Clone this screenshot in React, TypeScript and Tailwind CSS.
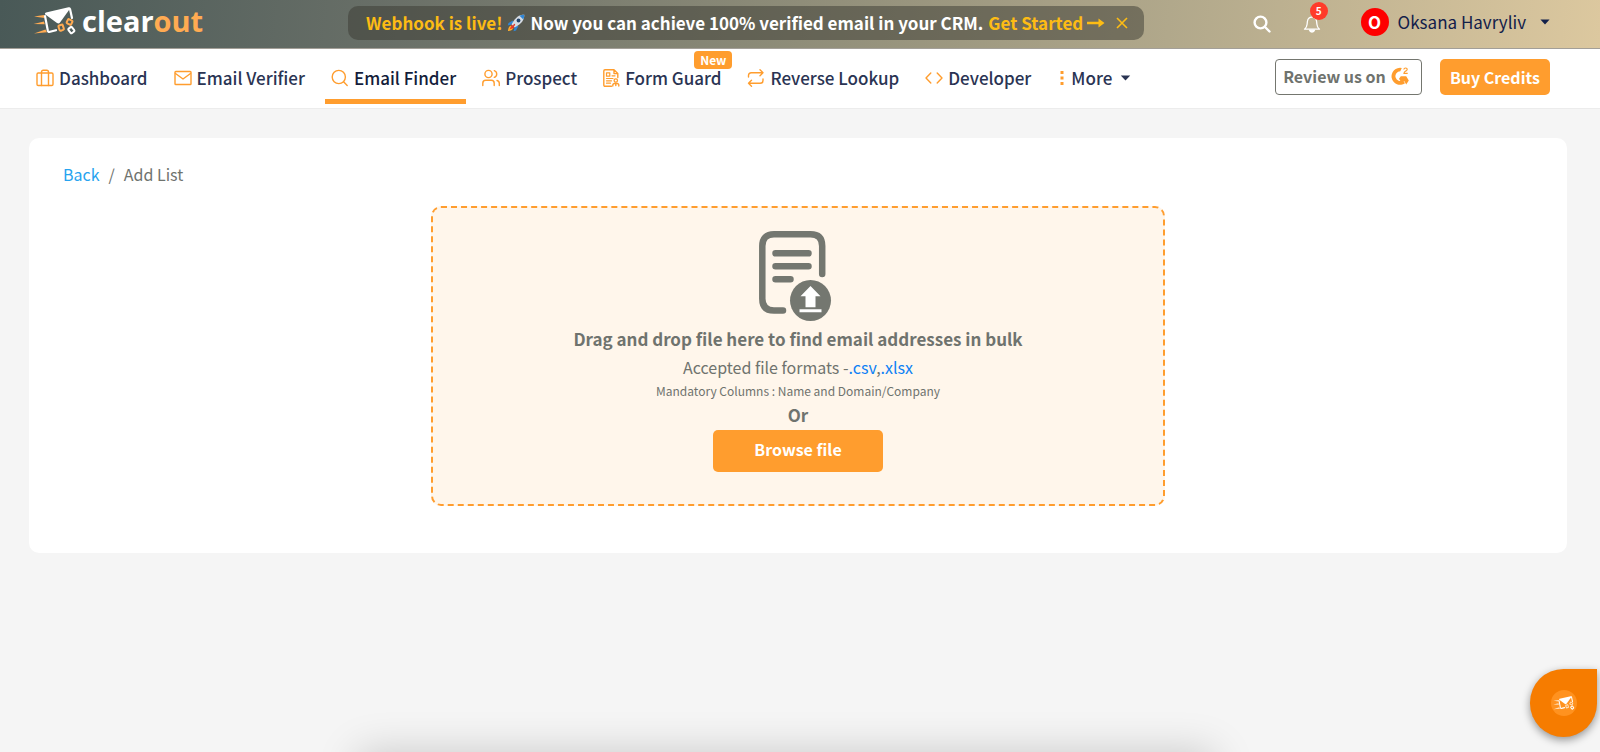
import React from "react";

function LogoMark({ className, accent = "#ffab52" }: { className: string; accent?: string }) {
  return (
    <svg className={className} viewBox="0 0 44 28" fill="none" aria-hidden="true">
      <path d="M1 9.500 11 8l.5 3zM.5 17l10.500-2.500.8 2.800zM1 26.500 12.500 22.500l1.500 2.800z" fill={accent} />
      <path d="m12 9 2.800 14.500q.4 1.800 2.200 1.300l6-1.600" stroke="#fff" strokeWidth="2.200" strokeLinecap="round" />
      <path d="m37 2 2 9" stroke="#fff" strokeWidth="2.200" strokeLinecap="round" />
      <path d="M12 7.200Q11.700 6 13 5.600L35.500.3q1.800-.4 2 .8L27 15.500q-1.200 1.500-3 .5z" fill="#fff" />
      <g strokeWidth="2">
        <rect x="26" y="18" width="4.500" height="5.500" rx="1" transform="rotate(-18 28 21)" stroke={accent} />
        <rect x="34" y="12.500" width="5" height="4.500" rx="1" transform="rotate(28 36 15)" stroke={accent} />
        <rect x="36" y="20.500" width="4.500" height="5.500" rx="1" transform="rotate(-38 38 23)" stroke="#fff" />
      </g>
    </svg>
  );
}

function Rocket() {
  return (
    <svg className="h-[18px] w-[18px]" viewBox="0 0 18 18" aria-hidden="true">
      <path d="M6 6.500 1.500 9l-.8 2.500L6 10zM11.500 12 9 16.500l-2.500.8L8 12z" fill="#2f86d6" />
      <path d="M4 11.500c-2 .8-2.800 3-3 5.500 2.500-.2 4.700-1 5.500-3z" fill="#ffb02e" />
      <path d="M4.500 12.500c-1 .6-1.600 1.600-1.900 2.900 1.300-.3 2.300-.9 2.900-1.900z" fill="#f8451f" />
      <path d="M17.300.7C12.500.6 8.500 2.800 4.500 10.500l3 3C15.200 9.500 17.400 5.500 17.300.7z" fill="#d5dbe3" />
      <path d="M17.300.7c-1.700 0-3.300.3-4.800 1l3.800 3.800c.7-1.500 1-3.100 1-4.800z" fill="#2f86d6" />
      <path d="m4.500 10.500 3 3-1.700.6-1.900-1.900z" fill="#e0392b" />
      <circle cx="11.500" cy="6.500" r="1.900" fill="#26486e" />
      <path d="m7.500 10.500-2.500 3.500" stroke="#e0392b" strokeWidth="1.300" strokeLinecap="round" />
    </svg>
  );
}

function Icon({ children, width = 18 }: { children: React.ReactNode; width?: number }) {
  return (
    <svg width={width} height="18" viewBox={`0 0 ${width} 18`} fill="none" stroke="#ff9d2e" strokeWidth="1.400" strokeLinecap="round" strokeLinejoin="round" aria-hidden="true" className="shrink-0">
      {children}
    </svg>
  );
}

function Caret({ className }: { className: string }) {
  return (
    <svg className={className} viewBox="0 0 12 7" fill="currentColor" aria-hidden="true">
      <path d="M.5.5h11L6 6.500z" />
    </svg>
  );
}

const items = [
  {
    label: "Dashboard",
    icon: (
      <Icon>
        <rect x="1" y="4" width="16" height="12.500" rx="1.200" />
        <path d="M5.500 16.500V3q0-1.800 1.800-1.800h3.400q1.800 0 1.800 1.800v13.500" />
      </Icon>
    ),
  },
  {
    label: "Email Verifier",
    icon: (
      <Icon>
        <rect x="1" y="2.500" width="16" height="13" rx=".8" />
        <path d="m1.500 4.500 7.500 5.500 7.500-5.500" />
      </Icon>
    ),
  },
  {
    label: "Email Finder",
    active: true,
    icon: (
      <Icon>
        <circle cx="7.800" cy="8" r="6.600" />
        <path d="m12.800 13 3.400 3.400" />
      </Icon>
    ),
  },
  {
    label: "Prospect",
    icon: (
      <Icon>
        <circle cx="6.500" cy="5" r="3.600" />
        <path d="M.8 16.500v-2.300q0-2.900 2.900-2.900h5.600q2.900 0 2.900 2.900v2.300M12.300 1.600a3.600 3.600 0 0 1 0 6.800M15 11.500q2.300.5 2.300 2.900v2.100" />
      </Icon>
    ),
  },
  {
    label: "Form Guard",
    isNew: true,
    icon: (
      <Icon width={17}>
        <path d="M8.500 17.200H2q-1.200 0-1.200-1.200V2Q.8.800 2 .8h9L14.800 4.600V8.500M11 .8v3.800h3.800" />
        <path d="M3.500 3.800h3.300v3.400H3.500zM9 6.800h3M3.500 9.500H10M3.500 11.800h5M3.500 14.200h4" strokeWidth="1.200" />
        <circle cx="12.800" cy="11.500" r="1.700" strokeWidth="1.300" />
        <path d="M9.800 17v-1q0-1.800 3-1.800t3 1.800v1M12.800 14.500v2" strokeWidth="1.400" />
      </Icon>
    ),
  },
  {
    label: "Reverse Lookup",
    icon: (
      <Icon>
        <path d="m13 .8 3 3-3 3M1.500 8V6.600q0-2.800 2.800-2.800H16M4.500 17.200l-3-3 3-3M16 10v1.400q0 2.800-2.800 2.800H1.500" />
      </Icon>
    ),
  },
  {
    label: "Developer",
    icon: (
      <Icon>
        <path d="M5.800 4 1 9l4.800 5M12.200 4 17 9l-4.800 5" />
      </Icon>
    ),
  },
];

export default function App() {
  return (
    <div className="relative min-h-screen overflow-hidden bg-[#f5f5f5] font-['Source_Sans_Pro','Noto_Sans_CJK_SC',sans-serif] text-[16px] text-[#6f736e]">
      <header className="flex h-[49px] items-center border-b border-[#a39f98] bg-[linear-gradient(95deg,#495957_0%,#6a7068_25%,#8f8d79_50%,#b1a88b_73%,#dcc89f_100%)] pr-[50px] pb-px pl-[33px] text-[17px]">
        <a href="#home" className="flex w-[315px] shrink-0 items-center gap-[5px] pb-[5px]">
          <LogoMark className="h-7 w-11" />
          <span className="font-['Open_Sans',sans-serif] text-[29px] leading-7 font-bold text-white">
            clear<span className="text-[#ffab52]">out</span>
          </span>
        </a>
        <div className="mb-px flex h-[34px] items-center gap-[5px] rounded-[10px] bg-[#3a3a32]/50 pr-4 pl-[18px] leading-6 font-bold whitespace-nowrap text-white">
          <span className="text-[#fdbc14]">Webhook is live!</span>
          <Rocket />
          <span>Now you can achieve 100% verified email in your CRM.</span>
          <a href="#webhook" className="flex items-center gap-[3px] text-[#fdbc14]">
            Get Started
            <svg className="h-3 w-[19px]" viewBox="0 0 19 12" fill="#fdbc14" aria-hidden="true">
              <path d="M1 4.800h11.500V1.500L18.500 6l-6 4.500V7.200H1z" />
            </svg>
          </a>
          <button type="button" aria-label="Dismiss" className="ml-[6px] text-[#fdbc14]">
            <svg className="h-3 w-3" viewBox="0 0 12 12" stroke="currentColor" strokeWidth="1.600" aria-hidden="true">
              <path d="m1 1 10 10M11 1 1 11" />
            </svg>
          </button>
        </div>
        <div className="ml-auto flex items-center">
          <button type="button" aria-label="Search" className="text-white">
            <svg className="h-[18px] w-[18px]" viewBox="0 0 18 18" fill="none" stroke="currentColor" strokeWidth="2.400" strokeLinecap="round" aria-hidden="true">
              <circle cx="7.500" cy="7.500" r="5.900" />
              <path d="m12 12 4.500 4.500" />
            </svg>
          </button>
          <button type="button" aria-label="Notifications, 5 unread" className="relative ml-8 text-white">
            <svg className="h-[18px] w-[18px]" viewBox="0 0 18 18" fill="none" stroke="currentColor" strokeWidth="1.300" strokeLinejoin="round" aria-hidden="true">
              <path d="M1.500 14.200q2.300-1.600 2.600-5l.3-2.700Q5 2.200 9 2.200t4.600 4.300l.3 2.700q.3 3.400 2.600 5z" />
              <path d="M6.500 15.200h5q-.5 1.800-2.500 1.800t-2.500-1.800z" fill="currentColor" />
            </svg>
            <span className="absolute -top-[13px] left-[7px] flex h-[18px] w-[18px] items-center justify-center rounded-full bg-[#ff3b2a] text-[10px] leading-none font-bold">5</span>
          </button>
          <button type="button" className="ml-10 flex items-center pb-1 leading-6 text-[#12204a]">
            <span className="mr-[9px] flex h-7 w-7 items-center justify-center rounded-full bg-[#fe0000] font-bold text-white">O</span>
            Oksana Havryliv
            <Caret className="ml-[14px] h-[6px] w-[10px]" />
          </button>
        </div>
      </header>

      <div className="flex h-[60px] items-start border-b border-[#ececec] bg-white pr-[50px] pl-[30px]">
        <nav className="flex items-center gap-[10px] text-[17px] font-medium whitespace-nowrap text-[#2a3453]">
          {items.map((item) => (
            <a
              key={item.label}
              href={"#" + item.label.toLowerCase().replace(" ", "-")}
              className={
                item.active
                  ? "relative flex h-[55px] items-center gap-[5px] border-b-[5px] border-[#ff9d2e] pt-2 pr-[10px] pl-[6px] leading-5 text-[#141d3b]"
                  : "relative flex h-[55px] items-center gap-[5px] border-b-[5px] border-transparent pt-2 pr-[10px] pl-[6px] leading-5"
              }
            >
              {item.icon}
              {item.label}
              {item.isNew && (
                <span className="absolute top-[2px] -right-px flex h-[18px] items-center rounded bg-[#ff9d2e] px-[6px] text-[12px] leading-none font-bold text-white">New</span>
              )}
            </a>
          ))}
          <button type="button" className="flex h-[55px] items-center gap-[6px] border-b-[5px] border-transparent pt-2 pl-[8px] leading-5">
            <svg className="h-[18px] w-[6px]" viewBox="0 0 6 18" fill="#ff9d2e" aria-hidden="true">
              <path d="M1.500 2h3v3h-3zM1.500 7.500h3v3h-3zM1.500 13h3v3h-3z" />
            </svg>
            More
            <Caret className="ml-[2px] h-[6px] w-[11px]" />
          </button>
        </nav>
        <div className="ml-auto flex items-center gap-[18px] pt-[10px] font-bold">
          <a href="#review" className="flex h-9 items-center gap-[5px] rounded-[4px] border border-[#74766f] pr-3 pb-[2px] pl-[7px]">
            Review us on
            <svg className="h-[18px] w-[18px]" viewBox="0 0 18 18" fill="none" aria-hidden="true">
              <path d="M10.800 1 9.300 4.200A4.900 4.900 0 1 0 12 13.200l2 3A8.500 8.500 0 1 1 10.800 1z" fill="#ff9d2e" />
              <path d="M9.800 9.300h5.400l2.600 4.300-2.600 4-1.800-3.300H9.500L8 11.800z" fill="#ff9d2e" />
              <path d="M12.800 2.500q.2-1.500 1.800-1.500t1.600 1.300q0 1-1.500 1.800-1.600.9-1.700 2.300h3.700" stroke="#ff9d2e" strokeWidth="1.200" />
            </svg>
          </a>
          <button type="button" className="h-9 rounded-[5px] bg-[#ff9d2e] px-[10px] text-white">Buy Credits</button>
        </div>
      </div>

      <main className="mt-[29px] mr-[33px] ml-[29px] rounded-[10px] bg-white pt-6 pb-[47px]">
        <nav aria-label="Breadcrumb" className="flex gap-[9px] pl-[34px] leading-6">
          <a href="#back" className="text-[#26a3ef]">Back</a>
          <span>/</span>
          <span>Add List</span>
        </nav>
        <section className="mx-auto mt-5 flex h-[300px] w-[734px] max-w-full flex-col items-center rounded-[10px] border-2 border-dashed border-[#ff9d2e] bg-[#fff6eb] pt-[22px]">
          <svg className="h-[92px] w-[78px]" viewBox="0 0 78 92" fill="none" aria-hidden="true">
            <g stroke="#747770" strokeWidth="6.500" strokeLinecap="round">
              <path d="M24 80.500H15q-11.700 0-11.700-11.700V16Q3.300 4.300 15 4.300h36.500Q63.200 4.300 63.200 16v28" />
              <path d="M16.500 23.300h33M16.500 36.300h33M16.500 49.300h15" />
            </g>
            <circle cx="51.500" cy="70.500" r="20.500" fill="#747770" />
            <path d="m51.500 56-10 10.200h5v11h10v-11h5zM40.500 79.200h22v3h-22z" fill="#fff" />
          </svg>
          <h1 className="mt-[5px] text-[17px] leading-6 font-bold">Drag and drop file here to find email addresses in bulk</h1>
          <p className="mt-1 leading-6">
            Accepted file formats -<a href="#csv" className="text-[#0d80f5]">.csv</a>,<a href="#xlsx" className="text-[#0d80f5]">.xlsx</a>
          </p>
          <p className="text-[12px] leading-6">Mandatory Columns : Name and Domain/Company</p>
          <p className="text-[17px] leading-6 font-bold">Or</p>
          <button type="button" className="mt-[3px] h-[42px] w-[170px] rounded-[5px] bg-[#ff9d2e] pb-1 font-bold text-white">Browse file</button>
        </section>
      </main>

      <div className="absolute top-full right-[386px] left-[358px] h-24 shadow-[0_0_42px_rgba(0,0,0,0.18)]" />
      <button type="button" aria-label="Open chat" className="absolute right-[3px] bottom-[15px] flex h-[68px] w-[67px] items-center justify-center rounded-full rounded-tr-[7px] bg-[#f67c00] shadow-[0_3px_8px_rgba(0,0,0,0.4)]">
        <span className="flex h-[26px] w-[26px] items-center justify-center rounded-full bg-[#ff921f]">
          <LogoMark className="h-[14px] w-[22px]" accent="#ffe3c2" />
        </span>
      </button>
    </div>
  );
}
